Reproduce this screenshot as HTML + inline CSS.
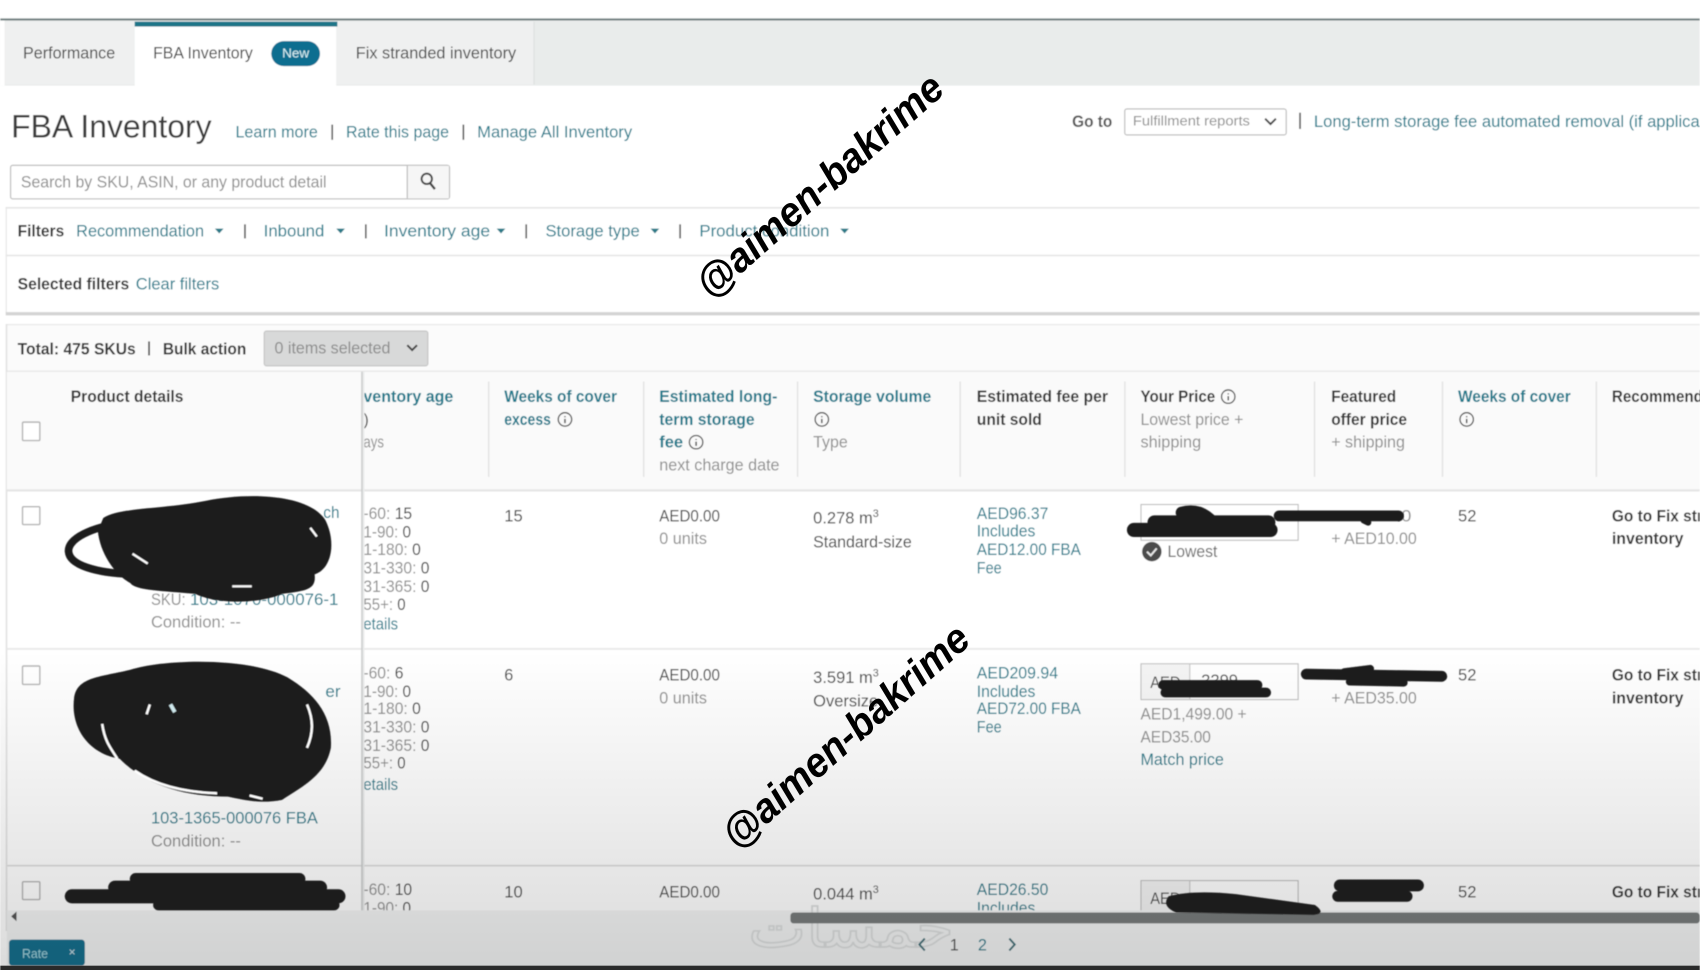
<!DOCTYPE html>
<html lang="en">
<head>
<meta charset="utf-8">
<title>FBA Inventory</title>
<style>
html,body{margin:0;padding:0;background:#fff;width:1700px;height:970px;overflow:hidden}
svg{display:block}
text{font-family:"Liberation Sans",sans-serif;font-size:15px;fill:#444}
.l{fill:#1c7c8c}
.b{font-weight:bold;fill:#363636}
.lb{font-weight:bold;fill:#1b7a8c}
.g{fill:#8f8f8f}
.k{fill:#4a4a4a}
.r{fill:none;stroke:#1d1d1d;stroke-linecap:round;stroke-linejoin:round}
</style>
</head>
<body>
<svg width="1700" height="970" viewBox="0 0 1568 895" xmlns="http://www.w3.org/2000/svg">
<defs>
<filter id="soft" x="-2%" y="-2%" width="104%" height="104%"><feGaussianBlur stdDeviation="0.55"/></filter>
<linearGradient id="fade" x1="0" y1="0" x2="0" y2="1"><stop offset="0" stop-color="#000" stop-opacity="0"/><stop offset="1" stop-color="#000" stop-opacity=".14"/></linearGradient>
<clipPath id="rowclip"><rect x="0" y="340" width="1568" height="500"/></clipPath>
<g id="info"><circle cx="0" cy="0" r="6.2" fill="none" stroke="#4d4d4d" stroke-width="1.2"/><path d="M0-3V-2M0-.5V3.4" stroke="#4d4d4d" stroke-width="1.4"/></g>
<path id="caret" d="M-4-2H4L0 2.5Z" fill="#2a7a88"/>
</defs>

<g filter="url(#soft)">
<rect width="1568" height="895" fill="#fff"/>
<rect y="17" width="1568" height="2" fill="#6f7f80"/>

<!-- Tabs -->
<rect x="0" y="19" width="1568" height="60" fill="#e9eceb"/>
<rect x="0" y="19" width="4" height="60" fill="#fff"/>
<rect x="4" y="20" width="120" height="58" fill="#eff0f0"/>
<rect x="310" y="20" width="182" height="58" fill="#eff0f0"/>
<rect x="492" y="20" width="1" height="58" fill="#dcdfdf"/>
<rect x="124" y="20" width="186" height="60" fill="#fff"/>
<rect x="124" y="20" width="187" height="4.5" fill="#1f7488"/>
<text x="21" y="54" textLength="85" lengthAdjust="spacingAndGlyphs" class="k">Performance</text>
<text x="141" y="54" textLength="92" lengthAdjust="spacingAndGlyphs">FBA Inventory</text>
<rect x="250" y="38" width="45" height="23" rx="11.5" fill="#0f6e90"/>
<text x="260" y="53" textLength="25" lengthAdjust="spacingAndGlyphs" style="fill:#d9f2f5;font-size:12px">New</text>
<text x="328" y="54" textLength="148" lengthAdjust="spacingAndGlyphs" class="k">Fix stranded inventory</text>

<!-- Title row -->
<text x="10" y="127" textLength="185" lengthAdjust="spacingAndGlyphs" style="font-size:30px;fill:#3a3a3a">FBA Inventory</text>
<text x="217" y="127" textLength="76" lengthAdjust="spacingAndGlyphs" class="l">Learn more</text>
<rect x="305.500" y="115" width="1.500" height="14" fill="#555"/>
<text x="319" y="127" textLength="95" lengthAdjust="spacingAndGlyphs" class="l">Rate this page</text>
<rect x="426.500" y="115" width="1.500" height="14" fill="#555"/>
<text x="440" y="127" textLength="143" lengthAdjust="spacingAndGlyphs" class="l">Manage All Inventory</text>

<text x="989" y="117" textLength="37" lengthAdjust="spacingAndGlyphs" class="b" style="fill:#555">Go to</text>
<rect x="1037.500" y="100.500" width="149" height="24" rx="2" fill="#fff" stroke="#b8b8b8"/>
<text x="1045" y="116" textLength="108" lengthAdjust="spacingAndGlyphs" class="g" style="font-size:13px">Fulfillment reports</text>
<path d="M1167 109.500l5 5 5-5" fill="none" stroke="#444" stroke-width="1.800"/>
<rect x="1198.500" y="104" width="1.500" height="15" fill="#555"/>
<text x="1212" y="117" textLength="356" lengthAdjust="spacingAndGlyphs" class="l">Long-term storage fee automated removal (if applica</text>

<!-- Search -->
<rect x="9.500" y="152.500" width="405" height="31" rx="2" fill="#fff" stroke="#b5b5b5"/>
<rect x="376" y="153" width="38" height="30" fill="#f6f6f6"/>
<rect x="375" y="153" width="1" height="30" fill="#b5b5b5"/>
<text x="19" y="173" textLength="282" lengthAdjust="spacingAndGlyphs" class="g">Search by SKU, ASIN, or any product detail</text>
<circle cx="393.500" cy="165" r="4.800" fill="none" stroke="#444" stroke-width="1.800"/>
<path d="M396.500 169l4.500 5.500" stroke="#444" stroke-width="2.200"/>

<!-- Filters panel -->
<rect x="5" y="191.500" width="1563" height="98" fill="#fff"/>
<rect x="5" y="191" width="1563" height="1.500" fill="#e6e6e6"/>
<rect x="5" y="191" width="1" height="98" fill="#e4e4e4"/>
<rect x="5" y="235" width="1563" height="1.500" fill="#e6e6e6"/>
<rect x="5" y="288" width="1563" height="3" fill="#d3d3d3"/>
<text x="16" y="218" textLength="43" lengthAdjust="spacingAndGlyphs" class="b">Filters</text>
<text x="70" y="218" textLength="118" lengthAdjust="spacingAndGlyphs" class="l">Recommendation</text>
<use href="#caret" x="202" y="213"/>
<rect x="225" y="207" width="1.500" height="13" fill="#555"/>
<text x="243" y="218" textLength="56" lengthAdjust="spacingAndGlyphs" class="l">Inbound</text>
<use href="#caret" x="314" y="213"/>
<rect x="336.500" y="207" width="1.500" height="13" fill="#555"/>
<text x="354" y="218" textLength="98" lengthAdjust="spacingAndGlyphs" class="l">Inventory age</text>
<use href="#caret" x="462" y="213"/>
<rect x="484.500" y="207" width="1.500" height="13" fill="#555"/>
<text x="503" y="218" textLength="87" lengthAdjust="spacingAndGlyphs" class="l">Storage type</text>
<use href="#caret" x="604" y="213"/>
<rect x="626.500" y="207" width="1.500" height="13" fill="#555"/>
<text x="645" y="218" textLength="120" lengthAdjust="spacingAndGlyphs" class="l">Product condition</text>
<use href="#caret" x="779" y="213"/>
<text x="16" y="267" textLength="103" lengthAdjust="spacingAndGlyphs" class="b">Selected filters</text>
<text x="125" y="267" textLength="77" lengthAdjust="spacingAndGlyphs" class="l">Clear filters</text>

<!-- Toolbar -->
<rect x="5" y="299" width="1563" height="1.500" fill="#e6e6e6"/>
<rect x="5" y="300" width="1563" height="43" fill="#fbfbfb"/>
<rect x="5" y="299" width="1.500" height="560" fill="#e2e2e2"/>
<text x="16" y="327" textLength="109" lengthAdjust="spacingAndGlyphs" class="b">Total: 475 SKUs</text>
<rect x="136.500" y="315" width="1.500" height="13" fill="#444"/>
<text x="150" y="327" textLength="77" lengthAdjust="spacingAndGlyphs" class="b">Bulk action</text>
<rect x="243.500" y="305.500" width="151" height="32" rx="2" fill="#d8d9d9" stroke="#c2c2c2"/>
<text x="253" y="326" textLength="107" lengthAdjust="spacingAndGlyphs" style="fill:#8c8c8c">0 items selected</text>
<path d="M375.500 318.500l4.500 4.500 4.500-4.500" fill="none" stroke="#444" stroke-width="1.900"/>

<!-- Table header -->
<rect x="6" y="342" width="1562" height="1.500" fill="#e3e3e3"/>
<rect x="6" y="343" width="1562" height="109" fill="#fafafa"/>
<rect x="6" y="451.500" width="1562" height="2" fill="#e5e5e5"/>
<g fill="#e2e2e2">
<rect x="450" y="352" width="1.300" height="88"/><rect x="593" y="352" width="1.300" height="88"/>
<rect x="735" y="352" width="1.300" height="88"/><rect x="885" y="352" width="1.300" height="88"/>
<rect x="1037" y="352" width="1.300" height="88"/><rect x="1212" y="352" width="1.300" height="88"/>
<rect x="1330" y="352" width="1.300" height="88"/><rect x="1472" y="352" width="1.300" height="88"/>
</g>
<text x="65" y="371" textLength="104" lengthAdjust="spacingAndGlyphs" class="b">Product details</text>
<rect x="20.500" y="389.500" width="16" height="17" rx="1" fill="#fff" stroke="#b4b4b4" stroke-width="1.300"/>
<text x="335" y="371" textLength="83" lengthAdjust="spacingAndGlyphs" class="lb">ventory age</text>
<text x="335" y="392" class="k">)</text>
<text x="335" y="413" textLength="19" lengthAdjust="spacingAndGlyphs" class="g">ays</text>
<text x="465" y="371" textLength="104" lengthAdjust="spacingAndGlyphs" class="lb">Weeks of cover</text>
<text x="465" y="392" textLength="43" lengthAdjust="spacingAndGlyphs" class="lb">excess</text>
<use href="#info" x="521" y="387"/>
<text x="608" y="371" textLength="109" lengthAdjust="spacingAndGlyphs" class="lb">Estimated long-</text>
<text x="608" y="392" textLength="88" lengthAdjust="spacingAndGlyphs" class="lb">term storage</text>
<text x="608" y="413" textLength="22" lengthAdjust="spacingAndGlyphs" class="lb">fee</text>
<use href="#info" x="642" y="408"/>
<text x="608" y="434" textLength="111" lengthAdjust="spacingAndGlyphs" class="g">next charge date</text>
<text x="750" y="371" textLength="109" lengthAdjust="spacingAndGlyphs" class="lb">Storage volume</text>
<use href="#info" x="758" y="387"/>
<text x="750" y="413" textLength="32" lengthAdjust="spacingAndGlyphs" class="g">Type</text>
<text x="901" y="371" textLength="121" lengthAdjust="spacingAndGlyphs" class="b">Estimated fee per</text>
<text x="901" y="392" textLength="60" lengthAdjust="spacingAndGlyphs" class="b">unit sold</text>
<text x="1052" y="371" textLength="69" lengthAdjust="spacingAndGlyphs" class="b">Your Price</text>
<use href="#info" x="1133" y="366"/>
<text x="1052" y="392" textLength="95" lengthAdjust="spacingAndGlyphs" class="g">Lowest price +</text>
<text x="1052" y="413" textLength="56" lengthAdjust="spacingAndGlyphs" class="g">shipping</text>
<text x="1228" y="371" textLength="60" lengthAdjust="spacingAndGlyphs" class="b">Featured</text>
<text x="1228" y="392" textLength="70" lengthAdjust="spacingAndGlyphs" class="b">offer price</text>
<text x="1228" y="413" textLength="68" lengthAdjust="spacingAndGlyphs" class="g">+ shipping</text>
<text x="1345" y="371" textLength="104" lengthAdjust="spacingAndGlyphs" class="lb">Weeks of cover</text>
<use href="#info" x="1353" y="387"/>
<text x="1487" y="371" textLength="84" lengthAdjust="spacingAndGlyphs" class="b">Recommend</text>

<g clip-path="url(#rowclip)">
<!-- Row 1 -->
<rect x="6.500" y="598" width="1562" height="1.500" fill="#e6e6e6"/>
<rect x="20.500" y="467.500" width="16" height="16.500" rx="1" fill="#fff" stroke="#b4b4b4" stroke-width="1.300"/>
<text x="298" y="478" textLength="15" lengthAdjust="spacingAndGlyphs" class="l">ch</text>
<text x="139" y="558" textLength="32" lengthAdjust="spacingAndGlyphs" class="g">SKU:</text>
<text x="175" y="558" textLength="137" lengthAdjust="spacingAndGlyphs" class="l">103-1070-000076-1</text>
<text x="139" y="579" textLength="83" lengthAdjust="spacingAndGlyphs" class="g">Condition: --</text>
<text x="335" y="479" textLength="45" lengthAdjust="spacingAndGlyphs"><tspan class="g">-60:</tspan> 15</text>
<text x="335" y="496" textLength="44" lengthAdjust="spacingAndGlyphs"><tspan class="g">1-90:</tspan> 0</text>
<text x="335" y="512" textLength="53" lengthAdjust="spacingAndGlyphs"><tspan class="g">1-180:</tspan> 0</text>
<text x="335" y="529" textLength="61" lengthAdjust="spacingAndGlyphs"><tspan class="g">31-330:</tspan> 0</text>
<text x="335" y="546" textLength="61" lengthAdjust="spacingAndGlyphs"><tspan class="g">31-365:</tspan> 0</text>
<text x="335" y="563" textLength="39" lengthAdjust="spacingAndGlyphs"><tspan class="g">55+:</tspan> 0</text>
<text x="335" y="581" textLength="32" lengthAdjust="spacingAndGlyphs" class="l">etails</text>
<text x="465" y="481" textLength="17" lengthAdjust="spacingAndGlyphs">15</text>
<text x="608" y="481" textLength="56" lengthAdjust="spacingAndGlyphs">AED0.00</text>
<text x="608" y="502" textLength="44" lengthAdjust="spacingAndGlyphs" class="g">0 units</text>
<text x="750" y="483" textLength="55" lengthAdjust="spacingAndGlyphs">0.278 m</text>
<text x="805" y="477" style="font-size:10px">3</text>
<text x="750" y="505" textLength="91" lengthAdjust="spacingAndGlyphs">Standard-size</text>
<text x="901" y="479" textLength="66" lengthAdjust="spacingAndGlyphs" class="l">AED96.37</text>
<text x="901" y="495" textLength="54" lengthAdjust="spacingAndGlyphs" class="l">Includes</text>
<text x="901" y="512" textLength="96" lengthAdjust="spacingAndGlyphs" class="l">AED12.00 FBA</text>
<text x="901" y="529" textLength="23" lengthAdjust="spacingAndGlyphs" class="l">Fee</text>
<rect x="1052.500" y="465.500" width="145" height="33" fill="#fff" stroke="#bcbcbc"/>
<circle cx="1062.500" cy="509" r="9" fill="#4c4c4c"/>
<path d="M1058 509l3.500 3.500 5.500-6.500" fill="none" stroke="#e8e8e8" stroke-width="1.800"/>
<text x="1077" y="514" textLength="46" lengthAdjust="spacingAndGlyphs" class="k" style="fill:#6a6a6a">Lowest</text>
<text x="1288" y="481" textLength="14" lengthAdjust="spacingAndGlyphs" class="g">.0</text>
<text x="1228" y="502" textLength="79" lengthAdjust="spacingAndGlyphs" class="g">+ AED10.00</text>
<text x="1345" y="481" textLength="17" lengthAdjust="spacingAndGlyphs">52</text>
<text x="1487" y="481" textLength="84" lengthAdjust="spacingAndGlyphs" class="b">Go to Fix str</text>
<text x="1487" y="502" textLength="66" lengthAdjust="spacingAndGlyphs" class="b">inventory</text>

<!-- Row 2 -->
<rect x="20.500" y="614.500" width="16" height="17" rx="1" fill="#fff" stroke="#b4b4b4" stroke-width="1.300"/>
<text x="300" y="643" textLength="14" lengthAdjust="spacingAndGlyphs" class="l">er</text>
<text x="139" y="760" textLength="154" lengthAdjust="spacingAndGlyphs" class="l">103-1365-000076 FBA</text>
<text x="139" y="781" textLength="83" lengthAdjust="spacingAndGlyphs" class="g">Condition: --</text>
<text x="335" y="626" textLength="37" lengthAdjust="spacingAndGlyphs"><tspan class="g">-60:</tspan> 6</text>
<text x="335" y="643" textLength="44" lengthAdjust="spacingAndGlyphs"><tspan class="g">1-90:</tspan> 0</text>
<text x="335" y="659" textLength="53" lengthAdjust="spacingAndGlyphs"><tspan class="g">1-180:</tspan> 0</text>
<text x="335" y="676" textLength="61" lengthAdjust="spacingAndGlyphs"><tspan class="g">31-330:</tspan> 0</text>
<text x="335" y="693" textLength="61" lengthAdjust="spacingAndGlyphs"><tspan class="g">31-365:</tspan> 0</text>
<text x="335" y="709" textLength="39" lengthAdjust="spacingAndGlyphs"><tspan class="g">55+:</tspan> 0</text>
<text x="335" y="729" textLength="32" lengthAdjust="spacingAndGlyphs" class="l">etails</text>
<text x="465" y="628">6</text>
<text x="608" y="628" textLength="56" lengthAdjust="spacingAndGlyphs">AED0.00</text>
<text x="608" y="649" textLength="44" lengthAdjust="spacingAndGlyphs" class="g">0 units</text>
<text x="750" y="630" textLength="55" lengthAdjust="spacingAndGlyphs">3.591 m</text>
<text x="805" y="624" style="font-size:10px">3</text>
<text x="750" y="652" textLength="60" lengthAdjust="spacingAndGlyphs">Oversize</text>
<text x="901" y="626" textLength="75" lengthAdjust="spacingAndGlyphs" class="l">AED209.94</text>
<text x="901" y="643" textLength="54" lengthAdjust="spacingAndGlyphs" class="l">Includes</text>
<text x="901" y="659" textLength="96" lengthAdjust="spacingAndGlyphs" class="l">AED72.00 FBA</text>
<text x="901" y="676" textLength="23" lengthAdjust="spacingAndGlyphs" class="l">Fee</text>
<rect x="1052.500" y="612.500" width="145" height="33" fill="#fff" stroke="#bcbcbc"/>
<rect x="1053" y="613" width="44" height="32" fill="#f4f4f4"/>
<rect x="1097" y="613" width="1" height="32" fill="#c4c4c4"/>
<text x="1061" y="635" textLength="28" lengthAdjust="spacingAndGlyphs" class="k">AED</text>
<text x="1108" y="633" textLength="34" lengthAdjust="spacingAndGlyphs" class="k">2299</text>
<text x="1052" y="664" textLength="98" lengthAdjust="spacingAndGlyphs" class="g">AED1,499.00 +</text>
<text x="1052" y="685" textLength="65" lengthAdjust="spacingAndGlyphs" class="g">AED35.00</text>
<text x="1052" y="706" textLength="77" lengthAdjust="spacingAndGlyphs" class="l">Match price</text>
<text x="1228" y="649" textLength="79" lengthAdjust="spacingAndGlyphs" class="g">+ AED35.00</text>
<text x="1345" y="628" textLength="17" lengthAdjust="spacingAndGlyphs">52</text>
<text x="1487" y="628" textLength="84" lengthAdjust="spacingAndGlyphs" class="b">Go to Fix str</text>
<text x="1487" y="649" textLength="66" lengthAdjust="spacingAndGlyphs" class="b">inventory</text>

<!-- Row 3 -->
<rect x="6.500" y="798" width="1562" height="1.500" fill="#dcdcdc"/>
<rect x="20.500" y="813.500" width="16" height="16.500" rx="1" fill="#fff" stroke="#b4b4b4" stroke-width="1.300"/>
<text x="335" y="826" textLength="45" lengthAdjust="spacingAndGlyphs"><tspan class="g">-60:</tspan> 10</text>
<text x="335" y="843" textLength="44" lengthAdjust="spacingAndGlyphs"><tspan class="g">1-90:</tspan> 0</text>
<text x="465" y="828" textLength="17" lengthAdjust="spacingAndGlyphs">10</text>
<text x="608" y="828" textLength="56" lengthAdjust="spacingAndGlyphs">AED0.00</text>
<text x="750" y="830" textLength="55" lengthAdjust="spacingAndGlyphs">0.044 m</text>
<text x="805" y="824" style="font-size:10px">3</text>
<text x="901" y="826" textLength="66" lengthAdjust="spacingAndGlyphs" class="l">AED26.50</text>
<text x="901" y="843" textLength="54" lengthAdjust="spacingAndGlyphs" class="l">Includes</text>
<rect x="1052.500" y="812.500" width="145" height="40" fill="#fff" stroke="#bcbcbc"/>
<rect x="1053" y="813" width="44" height="40" fill="#f4f4f4"/>
<rect x="1097" y="813" width="1" height="32" fill="#c4c4c4"/>
<text x="1061" y="834" textLength="28" lengthAdjust="spacingAndGlyphs" class="k">AED</text>
<text x="1345" y="828" textLength="17" lengthAdjust="spacingAndGlyphs">52</text>
<text x="1487" y="828" textLength="84" lengthAdjust="spacingAndGlyphs" class="b">Go to Fix str</text>
</g>

<!-- Sticky divider -->
<rect x="333" y="343" width="1.500" height="497" fill="#c9cbcb"/>
<rect x="334.500" y="343" width="1.500" height="497" fill="#ebecec"/>

<!-- Footer -->
<rect x="6" y="840" width="1562" height="52" fill="#f3f4f4"/>
<text x="690" y="874" textLength="190" lengthAdjust="spacingAndGlyphs" text-anchor="end" direction="rtl" style="font-family:'DejaVu Sans',sans-serif;font-size:50px;fill:none;stroke:#dcdede;stroke-width:1.5">خمسات</text>
<rect x="729" y="842" width="839" height="10" rx="3" fill="#787b7b"/>
<path d="M15 841v9l-5-4.500z" fill="#555"/>
<path d="M853 866l-5 5.500 5 5.500M931 866l5 5.500-5 5.500" fill="none" stroke="#3b6f78" stroke-width="1.800"/>
<text x="876" y="877" class="k">1</text>
<text x="902" y="877" class="l">2</text>
<rect x="8" y="867" width="70" height="24" rx="3" fill="#12708e"/>
<text x="20" y="884" textLength="24" lengthAdjust="spacingAndGlyphs" style="fill:#9fd6e0;font-size:12px">Rate</text>
<text x="63" y="882" style="fill:#cfe8ee;font-size:11px">×</text>
</g>

<!-- Soft bottom fade -->
<rect x="0" y="600" width="1568" height="291" fill="url(#fade)"/>
<rect x="0" y="891" width="1568" height="4" fill="#2a2a2a"/>

<!-- Redaction scribbles -->
<g filter="url(#soft)">
<path fill="#1d1d1d" d="M95 478C110 468 150 470 190 462C230 454 285 456 300 480C310 500 306 525 290 530C292 545 280 545 260 548C240 557 200 558 180 548C150 545 125 545 120 538C105 530 92 510 90 490Z"/>
<path class="r" stroke-width="7" d="M112 483C85 486 62 497 63 509c1 12 24 20 62 21"/>
<path fill="none" stroke="#fff" stroke-width="2" d="M122 511l14 9M286 487l6 8M214 541h18"/>

<path fill="#1d1d1d" d="M120 618C150 608 230 606 265 625C290 640 307 660 305 690C300 715 280 725 260 738C240 742 225 738 210 735C170 735 135 725 110 700C80 695 65 670 68 645C70 625 90 625 120 618Z"/>
<path fill="none" stroke="#fff" stroke-width="2.200" d="M94 668c2 14 6 20 14 32M283 650c6 14 6 26 0 40M124 711c20 14 46 20 76 21M138 650l-3 9M230 734l12 3"/>
<path fill="none" stroke="#cfe8ec" stroke-width="3.500" d="M157 650l4 7"/>

<g class="r">
<path stroke-width="11" d="M125 811H276"/>
<path stroke-width="13" d="M106 819H295"/>
<path stroke-width="13" d="M66 827H312"/>
<path stroke-width="10" d="M146 835H308"/>

<path stroke-width="11" d="M1090 473q15-4 26 6"/>
<path stroke-width="13" d="M1065 482H1170"/>
<path stroke-width="13" d="M1046 489H1172"/>
<path stroke-width="10" d="M1180 476H1290"/>
<path stroke-width="6" d="M1258 480l4 2"/>

<path stroke-width="9" d="M1073 632H1160"/>
<path stroke-width="9" d="M1075 639H1168"/>
<path stroke-width="10" d="M1205 622L1330 624"/>
<path stroke-width="7" d="M1240 620l24-3M1245 629l50 1"/>

<path stroke-width="11" d="M1236 817H1308"/>
<path stroke-width="10" d="M1234 827H1298"/>
</g>
<path fill="#1d1d1d" d="M1078 827Q1100 821 1140 825L1213 835Q1224 843 1212 844L1085 842Q1071 836 1078 827Z"/>
</g>

<!-- Watermarks -->
<text transform="translate(656 277) rotate(-41.500)" x="0" y="0" textLength="290" lengthAdjust="spacingAndGlyphs" style="font-size:38px;font-weight:bold;font-style:italic;fill:#000">@aimen-bakrime</text>
<text transform="translate(680 785) rotate(-41.500)" x="0" y="0" textLength="290" lengthAdjust="spacingAndGlyphs" style="font-size:38px;font-weight:bold;font-style:italic;fill:#000">@aimen-bakrime</text>
</svg>
</body>
</html>
